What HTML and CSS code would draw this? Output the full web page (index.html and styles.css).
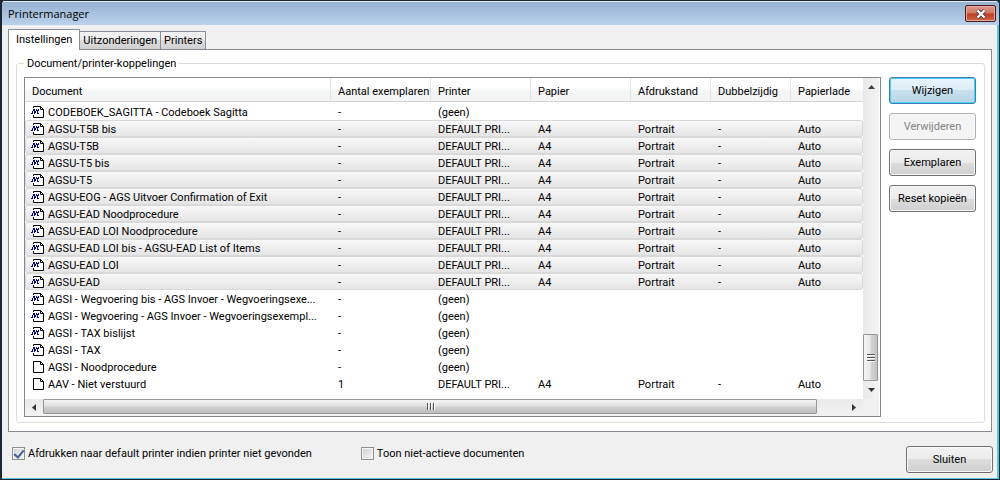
FILE: index.html
```html
<!DOCTYPE html>
<html lang="nl">
<head>
<meta charset="utf-8">
<title>Printermanager</title>
<link rel="stylesheet" href="styles.css">
</head>
<body>
<svg class="sprites" aria-hidden="true">
  <symbol id="page" viewBox="0 0 14 14">
    <path d="M2.500 1.500H9.500L12.500 4.500V12.500H2.500Z" fill="#fff" stroke="#000"/>
    <path d="M9.500 1.500V4.500H12.500" fill="none" stroke="#000"/>
  </symbol>
  <symbol id="macro" viewBox="0 0 14 14">
    <path d="M2.500 1.500H9.500L12.500 4.500V12.500H2.500Z" fill="#fff"/>
    <path d="M2.500 3V1.500H9.500L12.500 4.500V12.500H2.500V10M9.500 1.500V4.500H12.500" fill="none" stroke="#000"/>
    <path d="M2 4.500H4M5 4.500H6M7 4.500H8M2 5.500H4M5 5.500H8M1 6.500H2M3 6.500H5M6 6.500H7M1 7.500H2M3 7.500H5M6 7.500H7M0 8.500H2M3 8.500H4M6 8.500H8" fill="none" stroke="#000080" shape-rendering="crispEdges"/>
  </symbol>
</svg>
<main class="window">
  <header class="titlebar">
    <h1 class="title">Printermanager</h1>
    <button class="close" type="button" aria-label="Close">
      <svg width="12" height="10" viewBox="0 0 12 10"><path d="M2.500 1.500L9.500 8.500M9.500 1.500L2.500 8.500" stroke="#4a3a48" stroke-width="4"/><path d="M2.500 1.500L9.500 8.500M9.500 1.500L2.500 8.500" stroke="#fff" stroke-width="2.300"/></svg>
    </button>
  </header>
  <div class="client">
    <div class="tabs" role="tablist">
      <button class="tab active" type="button" role="tab" aria-selected="true">Instellingen</button>
      <button class="tab" type="button" role="tab" aria-selected="false">Uitzonderingen</button>
      <button class="tab" type="button" role="tab" aria-selected="false">Printers</button>
    </div>
    <section class="panel">
      <fieldset class="group">
        <legend>Document/printer-koppelingen</legend>
        <div class="columns">
          <div class="list">
            <div class="list-body">
              <table class="grid">
                <colgroup><col class="c-doc"><col class="c-wide"><col class="c-wide"><col class="c-wide"><col class="c-mid"><col class="c-mid"><col></colgroup>
                <thead><tr><th>Document</th><th>Aantal exemplaren</th><th>Printer</th><th>Papier</th><th>Afdrukstand</th><th>Dubbelzijdig</th><th>Papierlade</th></tr></thead>
                <tbody>
                  <tr><td><svg class="icon"><use href="#macro"/></svg>CODEBOEK_SAGITTA - Codeboek Sagitta</td><td>-</td><td>(geen)</td><td></td><td></td><td></td><td></td></tr>
                  <tr class="sel"><td><svg class="icon"><use href="#macro"/></svg>AGSU-T5B bis</td><td>-</td><td>DEFAULT PRI...</td><td>A4</td><td>Portrait</td><td>-</td><td>Auto</td></tr>
                  <tr class="sel"><td><svg class="icon"><use href="#macro"/></svg>AGSU-T5B</td><td>-</td><td>DEFAULT PRI...</td><td>A4</td><td>Portrait</td><td>-</td><td>Auto</td></tr>
                  <tr class="sel"><td><svg class="icon"><use href="#macro"/></svg>AGSU-T5 bis</td><td>-</td><td>DEFAULT PRI...</td><td>A4</td><td>Portrait</td><td>-</td><td>Auto</td></tr>
                  <tr class="sel"><td><svg class="icon"><use href="#macro"/></svg>AGSU-T5</td><td>-</td><td>DEFAULT PRI...</td><td>A4</td><td>Portrait</td><td>-</td><td>Auto</td></tr>
                  <tr class="sel"><td><svg class="icon"><use href="#macro"/></svg>AGSU-EOG - AGS Uitvoer Confirmation of Exit</td><td>-</td><td>DEFAULT PRI...</td><td>A4</td><td>Portrait</td><td>-</td><td>Auto</td></tr>
                  <tr class="sel"><td><svg class="icon"><use href="#macro"/></svg>AGSU-EAD Noodprocedure</td><td>-</td><td>DEFAULT PRI...</td><td>A4</td><td>Portrait</td><td>-</td><td>Auto</td></tr>
                  <tr class="sel"><td><svg class="icon"><use href="#macro"/></svg>AGSU-EAD LOI Noodprocedure</td><td>-</td><td>DEFAULT PRI...</td><td>A4</td><td>Portrait</td><td>-</td><td>Auto</td></tr>
                  <tr class="sel"><td><svg class="icon"><use href="#macro"/></svg>AGSU-EAD LOI bis - AGSU-EAD List of Items</td><td>-</td><td>DEFAULT PRI...</td><td>A4</td><td>Portrait</td><td>-</td><td>Auto</td></tr>
                  <tr class="sel"><td><svg class="icon"><use href="#macro"/></svg>AGSU-EAD LOI</td><td>-</td><td>DEFAULT PRI...</td><td>A4</td><td>Portrait</td><td>-</td><td>Auto</td></tr>
                  <tr class="sel"><td><svg class="icon"><use href="#macro"/></svg>AGSU-EAD</td><td>-</td><td>DEFAULT PRI...</td><td>A4</td><td>Portrait</td><td>-</td><td>Auto</td></tr>
                  <tr><td><svg class="icon"><use href="#macro"/></svg>AGSI - Wegvoering bis - AGS Invoer - Wegvoeringsexe...</td><td>-</td><td>(geen)</td><td></td><td></td><td></td><td></td></tr>
                  <tr><td><svg class="icon"><use href="#macro"/></svg>AGSI - Wegvoering - AGS Invoer - Wegvoeringsexempl...</td><td>-</td><td>(geen)</td><td></td><td></td><td></td><td></td></tr>
                  <tr><td><svg class="icon"><use href="#macro"/></svg>AGSI - TAX bislijst</td><td>-</td><td>(geen)</td><td></td><td></td><td></td><td></td></tr>
                  <tr><td><svg class="icon"><use href="#macro"/></svg>AGSI - TAX</td><td>-</td><td>(geen)</td><td></td><td></td><td></td><td></td></tr>
                  <tr><td><svg class="icon"><use href="#page"/></svg>AGSI - Noodprocedure</td><td>-</td><td>(geen)</td><td></td><td></td><td></td><td></td></tr>
                  <tr><td><svg class="icon"><use href="#page"/></svg>AAV - Niet verstuurd</td><td>1</td><td>DEFAULT PRI...</td><td>A4</td><td>Portrait</td><td>-</td><td>Auto</td></tr>
                </tbody>
              </table>
              <div class="vscroll">
                <button class="arrow" type="button" aria-label="Omhoog"><svg width="7" height="4"><path d="M0 4L3.500 0L7 4Z" fill="#444"/></svg></button>
                <div class="vtrack"><div class="vthumb"><svg width="8" height="9"><path d="M0 1.500H8M0 4.500H8M0 7.500H8" stroke="#555"/><path d="M0 2.500H8M0 5.500H8M0 8.500H8" stroke="#fff"/></svg></div></div>
                <button class="arrow" type="button" aria-label="Omlaag"><svg width="7" height="4"><path d="M0 0L3.500 4L7 0Z" fill="#333"/></svg></button>
              </div>
            </div>
            <div class="hscroll">
              <button class="arrow" type="button" aria-label="Links"><svg width="4" height="7"><path d="M4 0L0 3.500L4 7Z" fill="#333"/></svg></button>
              <div class="htrack"><div class="hthumb"><svg width="9" height="8"><path d="M1.500 0V7M4.500 0V7M7.500 0V7" stroke="#555"/><path d="M2.500 0V7M5.500 0V7M8.500 0V7" stroke="#fff"/></svg></div></div>
              <button class="arrow" type="button" aria-label="Rechts"><svg width="4" height="7"><path d="M0 0L4 3.500L0 7Z" fill="#333"/></svg></button>
              <div class="corner"></div>
            </div>
          </div>
          <div class="actions">
            <button class="btn primary" type="button">Wijzigen</button>
            <button class="btn" type="button" disabled>Verwijderen</button>
            <button class="btn" type="button">Exemplaren</button>
            <button class="btn" type="button">Reset kopieën</button>
          </div>
        </div>
      </fieldset>
    </section>
    <footer class="footer">
      <label class="check first"><input type="checkbox" checked>Afdrukken naar default printer indien printer niet gevonden</label>
      <label class="check"><input type="checkbox">Toon niet-actieve documenten</label>
      <button class="btn done" type="button">Sluiten</button>
    </footer>
  </div>
</main>
</body>
</html>
```
FILE: styles.css
```css
* { box-sizing: border-box; }

body {
  margin: 0;
  background: #1c2733;
  color: #000;
  font: 11px/13px Roboto, "Liberation Sans", Arial, sans-serif;
}

button, input { font: inherit; color: inherit; margin: 0; padding: 0; }

.sprites { display: none; }

.window {
  display: flex;
  flex-direction: column;
  min-height: 100vh;
  border: 1px solid #1c2733;
  border-left-width: 2px;
  border-radius: 5px 5px 0 0;
  background: #f0f0f0;
  box-shadow: inset -2px -1px 0 #5fc4e0;
  overflow: hidden;
}

.titlebar {
  display: flex;
  align-items: center;
  justify-content: space-between;
  height: 24px;
  padding: 0 3px 0 6px;
  border-top: 1px solid #e4edf6;
  background: linear-gradient(#96b2d2, #b9d1ea);
}

.title {
  margin: 0;
  font: 11px/16px "Open Sans", "Noto Sans", sans-serif;
}

.close {
  display: flex;
  align-items: center;
  justify-content: center;
  width: 31px;
  height: 17px;
  border: 1px solid #4b1a1a;
  border-radius: 2px;
  background: linear-gradient(#dd9a8c 0%, #d27763 48%, #bd3c22 52%, #cf6548 100%);
  box-shadow: inset 0 0 0 1px #e2aaa0;
}

.client {
  display: flex;
  flex: 1;
  flex-direction: column;
  padding: 4px 6px 6px 6px;
}

.tabs { display: flex; align-items: flex-end; }

.tab {
  height: 18px;
  padding: 0 3px;
  border: 1px solid #898c95;
  border-left-width: 0;
  border-bottom: 0;
  background: linear-gradient(#f2f2f2 0%, #ebebeb 50%, #dddddd 50%, #cfcfcf 100%);
}

.tab.active {
  z-index: 1;
  height: 21px;
  margin-bottom: -1px;
  padding: 0 7px 2px 7px;
  border-left-width: 1px;
  background: #fff;
}

.panel {
  display: flex;
  flex: 1;
  margin-right: 1px;
  padding: 7px 6px 8px 7px;
  border: 1px solid #898c95;
  background: #fff;
}

.group {
  display: flex;
  flex: 1;
  min-width: 0;
  margin: 0;
  padding: 7px 8px 5px 7px;
  border: 1px solid #dcdcdc;
  border-radius: 3px;
}

.group legend { padding: 0 3px; }

.columns { display: flex; flex: 1; gap: 8px; min-width: 0; }

.list {
  display: flex;
  flex: 1;
  flex-direction: column;
  min-width: 0;
  padding-right: 1px;
  border: 1px solid #828790;
}

.list-body { display: flex; flex: 1; align-items: stretch; }

.grid {
  flex: 1;
  align-self: flex-start;
  width: 0;
  border-spacing: 0;
  table-layout: fixed;
}

.c-doc { width: 306px; }
.c-wide { width: 100px; }
.c-mid { width: 80px; }

.grid th, .grid td {
  height: 17px;
  padding: 1px 0 0 7px;
  text-align: left;
  font-weight: inherit;
  white-space: nowrap;
}

.grid th {
  height: 24px;
  padding-top: 3px;
  border-right: 1px solid #e2e3e5;
  border-bottom: 1px solid #d5d5d5;
  background: linear-gradient(#fff 40%, #f4f5f6 60%);
}

.grid th:last-child { border-right: 0; }

.grid tbody::before { content: ""; display: table-row; height: 1px; }

.grid .sel td {
  border-top: 1px solid #d9d9d9;
  border-bottom: 1px solid #d9d9d9;
  background: linear-gradient(#f8f8f8, #e5e5e5);
}

.grid .sel td:first-child { border-left: 1px solid #d9d9d9; border-radius: 3px 0 0 3px; padding-left: 6px; }
.grid .sel td:last-child { border-right: 1px solid #d9d9d9; border-radius: 0 3px 3px 0; }

.icon {
  width: 14px;
  height: 14px;
  margin: -1px 3px 0 -1px;
  vertical-align: top;
}

.arrow {
  display: flex;
  flex: none;
  align-items: center;
  justify-content: center;
  width: 16px;
  height: 18px;
  border: 0;
  background: transparent;
}

.vscroll {
  display: flex;
  flex-direction: column;
  width: 16px;
  background: linear-gradient(90deg, #e9e9e9, #f3f3f3);
}

.vtrack { display: flex; flex: 1; flex-direction: column; justify-content: flex-end; }

.vthumb {
  display: flex;
  align-items: center;
  justify-content: center;
  width: 15px;
  height: 47px;
  border: 1px solid #979797;
  border-radius: 1px;
  background: linear-gradient(90deg, #f5f5f5, #e6e6e6 48%, #d3d3d3 55%, #c4c4c4);
}

.hscroll { display: flex; height: 17px; background: linear-gradient(#e9e9e9, #f3f3f3); }
.hscroll .arrow { width: 18px; height: 16px; }
.htrack { flex: 1; padding-right: 28px; }

.hthumb {
  display: flex;
  align-items: center;
  justify-content: center;
  height: 15px;
  border: 1px solid #979797;
  border-radius: 1px;
  background: linear-gradient(#f5f5f5, #e0e0e0 48%, #cfcfcf 55%, #bebebe);
}

.corner { width: 16px; background: #f0f0f0; }

.actions { display: flex; flex-direction: column; gap: 9px; }

.btn {
  width: 87px;
  height: 27px;
  border: 1px solid #707070;
  border-radius: 3px;
  background: linear-gradient(#f2f2f2 0%, #ebebeb 50%, #dddddd 50%, #cfcfcf 100%);
  box-shadow: inset 0 0 0 1px #f8f8f8;
}

.btn.primary {
  border-color: #3c7fb1;
  background: linear-gradient(#eaf5fb 0%, #dcecf6 50%, #c8dfed 50%, #b8d5e6 100%);
  box-shadow: inset 0 0 0 1px #48d0f4;
}

.btn:disabled { border-color: #adb2b5; background: #f4f4f4; color: #838383; }

.footer { display: flex; align-items: flex-start; padding: 14px 0 0 4px; }

.check { display: flex; align-items: center; gap: 3px; margin-top: 1px; }
.check.first { margin-right: 49px; }

.check input {
  appearance: none;
  display: grid;
  place-items: center;
  width: 13px;
  height: 13px;
  border: 1px solid #8e8f8f;
  background: linear-gradient(135deg, #cdd0d4, #f6f6f6);
  box-shadow: inset 0 0 0 1px #f4f4f4;
}

.check input:checked::after {
  content: "";
  width: 4px;
  height: 8px;
  margin-bottom: 2px;
  border: solid #4b5f97;
  border-width: 0 2px 2px 0;
  transform: rotate(40deg);
}

.done { margin-left: auto; }
```
